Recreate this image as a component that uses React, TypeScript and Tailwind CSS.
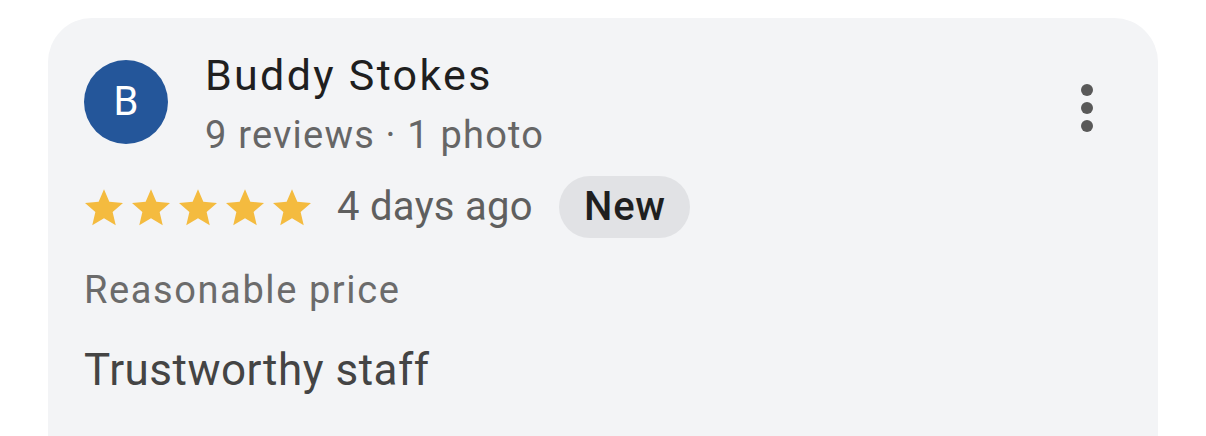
const Star = () => (
  <svg viewBox="2 2 20 19.3" className="w-[38px] h-[37px]" fill="#f4bb3f">
    <path d="M12 17.27L18.18 21l-1.64-7.03L22 9.24l-7.19-.61L12 2 9.19 8.63 2 9.24l5.46 4.73L5.82 21z" />
  </svg>
);

export default function App() {
  return (
    <div className="w-full h-[436px] overflow-hidden bg-white px-[48px] pt-[18px] font-['Roboto',sans-serif]">
      <div className="h-[500px] rounded-[44px] bg-[#f3f4f6] pl-[36px] pr-[65px] pt-[33px]">
        {/* header */}
        <div className="flex items-start">
          <div className="mt-[9px] flex h-[84px] w-[84px] shrink-0 items-center justify-center rounded-full bg-[#24569a] text-[40px] leading-none text-white">
            B
          </div>
          <div className="ml-[37px] flex-1">
            <div className="text-[43px] leading-[48px] tracking-[2.3px] text-[#1f1f1f]">Buddy Stokes</div>
            <div className="mt-[12px] text-[38px] leading-[48px] tracking-[1.2px] text-[#666666]">9 reviews · 1 photo</div>
          </div>
          <div className="mt-[33px] flex flex-col gap-[6px]">
            <span className="h-[12px] w-[12px] rounded-full bg-[#595959]" />
            <span className="h-[12px] w-[12px] rounded-full bg-[#595959]" />
            <span className="h-[12px] w-[12px] rounded-full bg-[#595959]" />
          </div>
        </div>

        {/* rating row */}
        <div className="mt-[17px] flex items-center">
          <div className="ml-[1px] flex gap-[9px]">
            <Star />
            <Star />
            <Star />
            <Star />
            <Star />
          </div>
          <span className="ml-[26px] text-[40px] leading-[48px] tracking-[0.3px] text-[#5f5f5f]">4 days ago</span>
          <span className="ml-[26px] flex h-[62px] items-center rounded-full bg-[#e1e2e5] pl-[25px] pr-[24px] text-[40px] font-medium tracking-[0.8px] text-[#1f1f1f]">
            New
          </span>
        </div>

        <div className="mt-[28px] text-[38px] leading-[48px] tracking-[1.6px] text-[#6b6b6b]">Reasonable price</div>
        <div className="mt-[30px] text-[44px] leading-[52px] tracking-[0.5px] text-[#444444]">Trustworthy staff</div>
      </div>
    </div>
  );
}
